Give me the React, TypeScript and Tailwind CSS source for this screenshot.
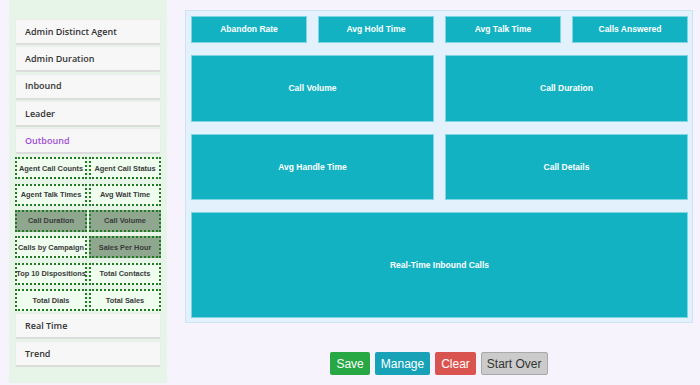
import React from "react"

const navTop = ["Admin Distinct Agent", "Admin Duration", "Inbound", "Leader"]

const reports = [
    { name: "Agent Call Counts", on: false },
    { name: "Agent Call Status", on: false },
    { name: "Agent Talk Times", on: false },
    { name: "Avg Wait Time", on: false },
    { name: "Call Duration", on: true },
    { name: "Call Volume", on: true },
    { name: "Calls by Campaign", on: false },
    { name: "Sales Per Hour", on: true },
    { name: "Top 10 Dispositions", on: false },
    { name: "Total Contacts", on: false },
    { name: "Total Dials", on: false },
    { name: "Total Sales", on: false },
]

function NavItem({ label, active }: { label: string; active?: boolean }) {
    return (
        <div
            className={
                "h-[26px] flex items-center pl-[9px] bg-[#f7f7f7] border border-[#ececec] border-b-2 border-b-[#dcdcdc] rounded-[2px] text-[9px] font-semibold font-['Open_Sans',sans-serif] " +
                (active ? "text-[#a24ed6]" : "text-[#333]")
            }
        >
            {label}
        </div>
    )
}

function Tile({ label, className }: { label: string; className: string }) {
    return (
        <div
            className={
                "flex items-center justify-center bg-[#13b2c3] border border-[#7fd6e2] text-white text-[8.5px] font-bold font-['Liberation_Sans',Arial,sans-serif] " +
                className
            }
        >
            {label}
        </div>
    )
}

export default function App() {
    return (
        <div className="w-[700px] h-[385px] bg-[#f6f3fd] flex overflow-hidden">
            {/* Sidebar */}
            <aside className="ml-[9px] w-[158px] h-[383px] bg-[#e7f5e8] px-[6px] pt-[19px]">
                <div className="flex flex-col gap-[1.3px]">
                    {navTop.map((n) => (
                        <NavItem key={n} label={n} />
                    ))}
                    <NavItem label="Outbound" active />
                </div>
                <div className="grid grid-cols-2 gap-x-[2px] gap-y-[4.4px] mt-[3px]">
                    {reports.map((r) => (
                        <div
                            key={r.name}
                            className={
                                "h-[22px] flex items-center justify-center border-2 border-dotted border-[#217a21] text-[#3a3a3a] text-[7.4px] font-bold whitespace-nowrap font-['Liberation_Sans',Arial,sans-serif] " +
                                (r.on ? "bg-[#8fa78f]" : "bg-[#effdef]")
                            }
                        >
                            {r.name}
                        </div>
                    ))}
                </div>
                <div className="flex flex-col gap-[2px] mt-[2px]">
                    <NavItem label="Real Time" />
                    <NavItem label="Trend" />
                </div>
            </aside>

            {/* Main */}
            <main className="ml-[18px] w-[508px] flex flex-col">
                <div className="mt-[10px] bg-[#e2f1fc] border border-[#cde4f5] pl-[5px] pr-[4px] pt-[5px] pb-[4px]">
                    <div className="grid grid-cols-4 gap-x-[11px] gap-y-[12px]">
                        <Tile label="Abandon Rate" className="h-[27px]" />
                        <Tile label="Avg Hold Time" className="h-[27px]" />
                        <Tile label="Avg Talk Time" className="h-[27px]" />
                        <Tile label="Calls Answered" className="h-[27px]" />
                        <Tile label="Call Volume" className="col-span-2 h-[67px]" />
                        <Tile label="Call Duration" className="col-span-2 h-[67px]" />
                        <Tile label="Avg Handle Time" className="col-span-2 h-[66px]" />
                        <Tile label="Call Details" className="col-span-2 h-[66px]" />
                        <Tile label="Real-Time Inbound Calls" className="col-span-4 h-[106px]" />
                    </div>
                </div>

                <div className="mt-[29px] flex justify-center gap-[5px] font-['Liberation_Sans',Arial,sans-serif] text-[12px]">
                    <button className="h-[23px] px-[6px] bg-[#28a745] text-white rounded-[2px]">Save</button>
                    <button className="h-[23px] px-[6px] bg-[#17a2b8] text-white rounded-[2px]">Manage</button>
                    <button className="h-[23px] px-[6px] bg-[#d9534f] text-white rounded-[2px]">Clear</button>
                    <button className="h-[23px] px-[5px] bg-[#cbcbcb] border border-[#a9a9a9] text-[#333] rounded-[2px]">Start Over</button>
                </div>
            </main>
        </div>
    )
}
